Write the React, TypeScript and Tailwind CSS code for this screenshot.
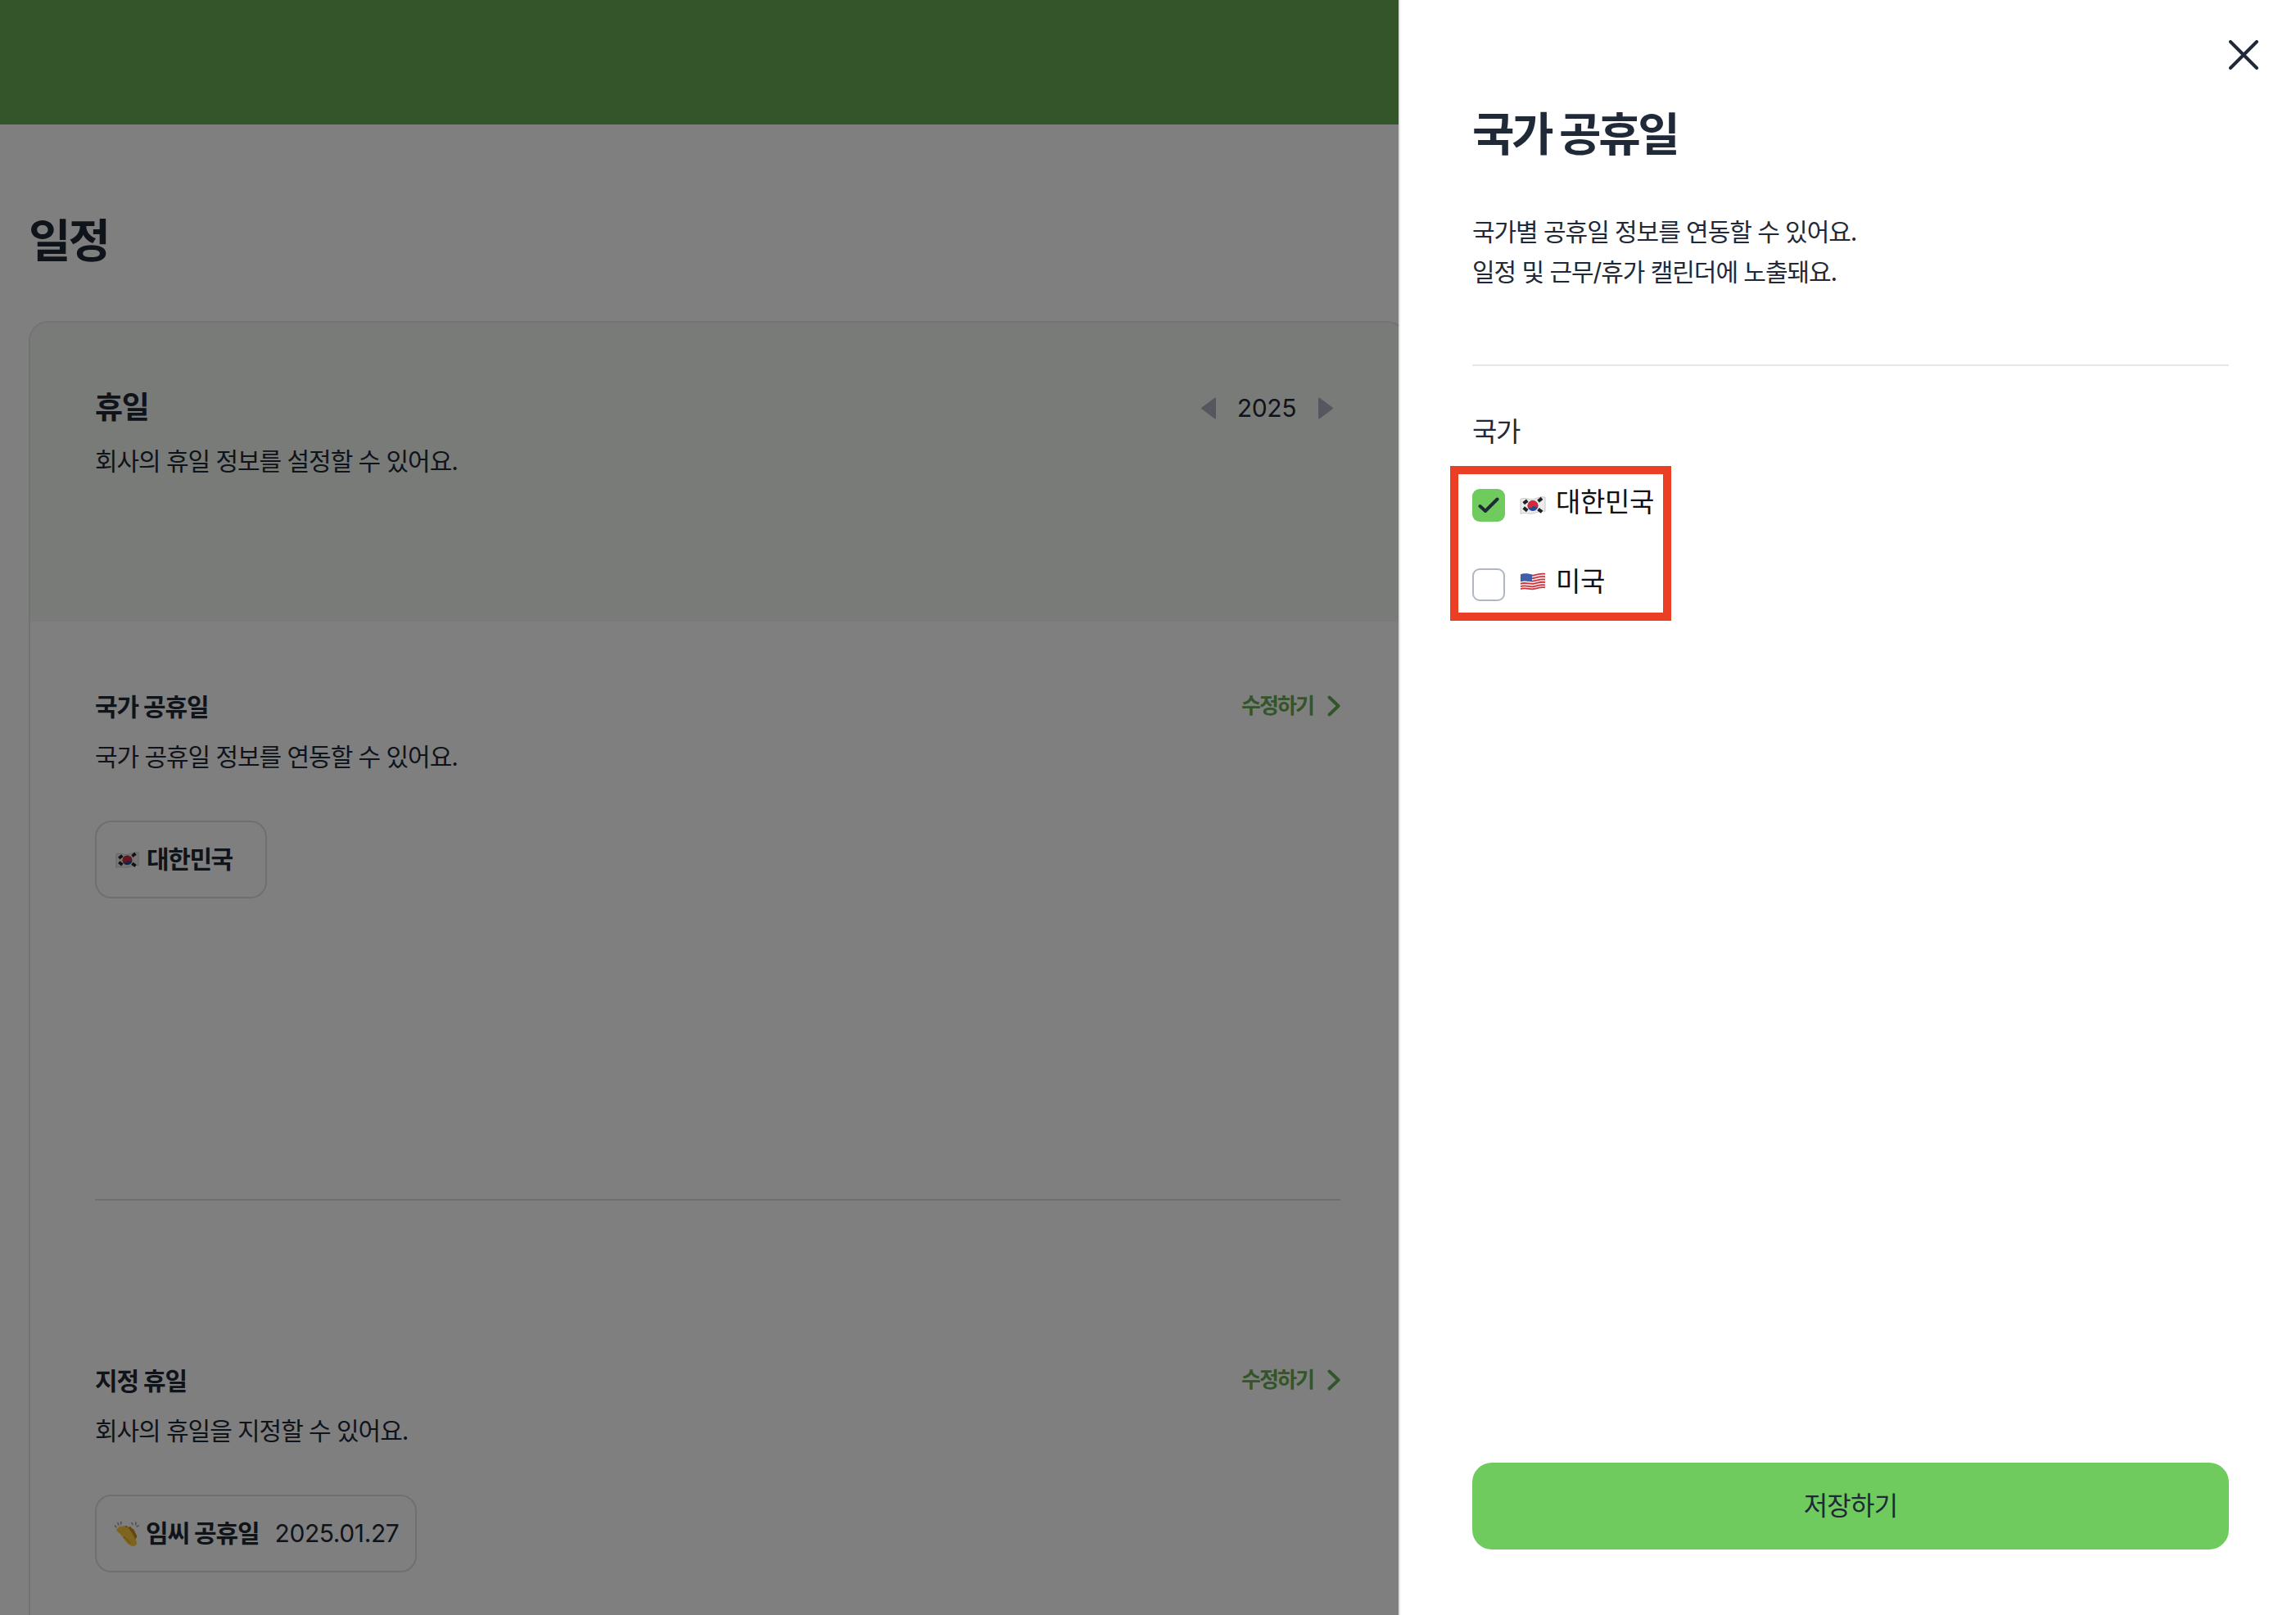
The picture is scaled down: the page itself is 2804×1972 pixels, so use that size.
// 일정 > 휴일 설정 화면 + 국가 공휴일 Drawer
import type { ReactNode } from 'react'

function KoreaFlag({ className }: { className?: string }) {
  return (
    <svg viewBox="0 0 32 24" className={className}>
      <path
        d="M1 4.500C7 1.500 12 6 17 4.500S26 .8 31 2.200V19.500C26 18 21 21 16 22S6 20 1 22.500Z"
        fill="#ececec"
        stroke="#bdbdbd"
        strokeWidth="0.800"
      />
      <circle cx="16" cy="12.500" r="6.500" fill="#254b96" />
      <path d="M9.600 13.600a6.500 6.500 0 0 1 12.800-2.200c.3 1.900-1.900 3.200-3.500 2.100-1.500-1-3.200-.7-4.100.9-1.100 1.700-4.700 1-5.200-.8Z" fill="#d8283a" />
      <g stroke="#222" strokeWidth="2">
        <path d="M4.200 7.500l2.600 3.200M5.700 6.300l2.600 3.200M7.200 5.100l2.600 3.200" />
        <path d="M22 4.800l2.600 3.200M23.500 3.600L26.100 6.800M25 2.400l2.600 3.200" />
        <path d="M4.200 17.200l2.600-3.200M5.700 18.400l2.600-3.200M7.200 19.600l2.600-3.200" />
        <path d="M22 18.800l2.600-3.200M23.500 20L26.100 16.800M25 21.200l2.600-3.200" />
      </g>
    </svg>
  )
}

function UsaFlag({ className }: { className?: string }) {
  const stripes = [4.600, 8, 11.400, 14.800, 18.200, 21.200]
  return (
    <svg viewBox="0 0 32 24" className={className}>
      <path d="M1 3.500C7 .8 12 4.500 17 3.500S26 .5 31 1.600V20.500C26 19 21 21.500 16 22.300S6 21 1 23Z" fill="#f5f1f1" />
      {stripes.map((y) => (
        <path
          key={y}
          d={`M1 ${y}C7 ${y - 2.4} 12 ${y + 1} 17 ${y}S26 ${y - 2.8} 31 ${y - 1.8}`}
          fill="none"
          stroke="#d0353f"
          strokeWidth="1.800"
        />
      ))}
      <path d="M1 3.500C5 1.600 10 2.400 15 3.600V12.200C10 11 5 10.400 1 12.400Z" fill="#3f5fa8" />
    </svg>
  )
}

function ClapIcon({ className }: { className?: string }) {
  return (
    <svg viewBox="0 0 32 32" className={className}>
      <g stroke="#9a9a9a" strokeWidth="1.600" strokeLinecap="round">
        <path d="M1.500 6l1.200 1.500M5 2.500l.6 2.400M9 1.500l-.4 2.400M22 2.500l.8 2M27 2l-.4 2.600M30 6l-1.800 1" />
      </g>
      {/* 뒤쪽 손 */}
      <g stroke="#c88f1f" strokeWidth="4.600" strokeLinecap="round" fill="none">
        <path d="M24 23L15 8.500M25 21L19.500 9.500M26 19L22.500 12" />
      </g>
      {/* 앞쪽 손 */}
      <g stroke="#ffc93f" strokeWidth="4.400" strokeLinecap="round" fill="none">
        <path d="M17 21L5.500 11M18 19L8 8.500M20 18L12 8.200M21 17L16 10" />
      </g>
      <path d="M7 14c4-3 9-4 13-.5 3 2.500 4 5 5.500 8 1 2 3 4 2.500 6.500-.6 2.500-3.500 3.500-6.500 2.500C16 29 11 20 7 14Z" fill="#ffc93f" />
      <path d="M12 20c3 1 6 4 8 8" stroke="#c88f1f" strokeWidth="1" fill="none" />
    </svg>
  )
}

function EditLink() {
  return (
    <a className="-mt-[2px] flex items-center text-[26px] leading-[40px] font-bold tracking-[-1.900px] text-[#64ac54]">
      수정하기
      <svg viewBox="0 0 16 26" className="ml-[17px] h-[26px] w-[16px]" fill="none" stroke="currentColor" strokeWidth="4" strokeLinecap="round" strokeLinejoin="round">
        <path d="M2.500 2.500L13.500 13L2.500 23.500" />
      </svg>
    </a>
  )
}

function Chip({ children, width }: { children: ReactNode; width: string }) {
  return (
    <div className={`flex h-[95px] items-center rounded-[20px] border-2 border-[#dfdfdf] ${width}`}>{children}</div>
  )
}

function Section({ title, desc, children }: { title: string; desc: string; children: ReactNode }) {
  return (
    <div>
      <div className="flex h-[40px] items-center justify-between">
        <h3 className="text-[30px] leading-[40px] font-bold tracking-[-1.100px]">{title}</h3>
        <EditLink />
      </div>
      <p className="mt-[19px] text-[30px] leading-[44px] tracking-[-1.050px]">{desc}</p>
      <div className="mt-[56px]">{children}</div>
    </div>
  )
}

export default function App() {
  return (
    <div className="relative h-[1972px] w-[2804px] overflow-hidden bg-white text-[#1f2937] [font-family:Inter,'Noto_Sans_CJK_KR',sans-serif]">
      <div className="h-[152px] bg-[#65ad55]" />

      <div className="w-[1718px] pl-[35px]">
        <h1 className="mt-[106px] text-[56px] leading-[72px] font-bold tracking-[-3px]">일정</h1>

        <div className="mt-[62px] rounded-t-[24px] border-2 border-b-0 border-[#e3e5e3]">
          {/* 휴일 헤더 */}
          <div className="h-[365px] rounded-t-[22px] bg-[#f2f6f2] pt-[80px] pr-[79px] pl-[79px]">
            <div className="flex items-start justify-between">
              <h2 className="text-[37px] leading-[48px] font-bold tracking-[-1.200px]">휴일</h2>
              <div className="mr-[9px] flex h-[48px] items-center">
                <svg viewBox="0 0 18 27" className="h-[27px] w-[18px]" fill="#a9b1bd" stroke="#a9b1bd" strokeWidth="2" strokeLinejoin="round">
                  <path d="M17 1.500V25.500L1 13.500Z" />
                </svg>
                <span className="mr-[27px] ml-[26px] text-[30px] leading-[48px] tracking-[-0.400px]">2025</span>
                <svg viewBox="0 0 18 27" className="h-[27px] w-[18px]" fill="#a9b1bd" stroke="#a9b1bd" strokeWidth="2" strokeLinejoin="round">
                  <path d="M1 1.500V25.500L17 13.500Z" />
                </svg>
              </div>
            </div>
            <p className="mt-[19px] text-[30px] leading-[44px] tracking-[-1.050px]">회사의 휴일 정보를 설정할 수 있어요.</p>
          </div>

          <div className="px-[79px] pt-[84px] pb-[200px]">
            <Section title="국가 공휴일" desc="국가 공휴일 정보를 연동할 수 있어요.">
              <Chip width="w-[210px]">
                <KoreaFlag className="ml-[23px] h-[22px] w-[29px]" />
                <span className="ml-[9px] text-[30px] font-bold tracking-[-1.400px]">대한민국</span>
              </Chip>
            </Section>

            <div className="mt-[367px] h-[2px] bg-[#dfdfdf]" />

            <div className="mt-[200px]">
              <Section title="지정 휴일" desc="회사의 휴일을 지정할 수 있어요.">
                <Chip width="w-[393px]">
                  <ClapIcon className="ml-[21px] h-[32px] w-[32px]" />
                  <span className="ml-[7px] text-[30px] font-bold tracking-[-1.100px]">임씨 공휴일</span>
                  <span className="ml-[19px] text-[30px] tracking-[-0.400px]">2025.01.27</span>
                </Chip>
              </Section>
            </div>
          </div>
        </div>
      </div>

      {/* 딤 처리 */}
      <div className="absolute inset-0 bg-black/50" />

      {/* 국가 공휴일 Drawer */}
      <aside className="absolute top-0 right-0 bottom-0 flex w-[1096px] flex-col border-l-2 border-[#e2e3e5] bg-white pt-[128px] pr-[82px] pl-[88px]">
        <button type="button" className="absolute top-[49px] right-[46px]" aria-label="닫기">
          <svg viewBox="0 0 36 36" className="block h-[36px] w-[36px]" fill="none" stroke="#1f2937" strokeWidth="4" strokeLinecap="round">
            <path d="M2 2L34 34M34 2L2 34" />
          </svg>
        </button>

        <h2 className="text-[56px] leading-[72px] font-bold tracking-[-3.400px]">국가 공휴일</h2>

        <p className="mt-[59px] text-[30px] leading-[49px] tracking-[-1.050px]">
          국가별 공휴일 정보를 연동할 수 있어요.
          <br />
          일정 및 근무/휴가 캘린더에 노출돼요.
        </p>

        <div className="mt-[88px] h-[2px] bg-[#e5e7eb]" />

        <p className="mt-[58px] text-[33px] leading-[44px] tracking-[-1.400px]">국가</p>

        <div className="mt-[20px] -ml-[27px] h-[189px] w-[270px] border-[10px] border-[#ea3f24] pt-[18px] pl-[17px] text-[33px] tracking-[-0.400px] text-[#111]">
          <label className="flex h-[40px] items-center">
            <span className="flex h-[40px] w-[40px] items-center justify-center rounded-[9px] bg-[#70cb5e]">
              <svg viewBox="0 0 26 20" className="h-[20px] w-[26px]" fill="none" stroke="#1f2937" strokeWidth="4" strokeLinecap="round" strokeLinejoin="round">
                <path d="M2.500 11L9 17L23.500 2.500" />
              </svg>
            </span>
            <KoreaFlag className="ml-[18px] h-[24px] w-[32px]" />
            <span className="relative -top-[3px] ml-[12px]">대한민국</span>
          </label>
          <label className="mt-[57px] flex h-[40px] items-center">
            <span className="h-[40px] w-[40px] rounded-[9px] border-2 border-[#b0b6c3]" />
            <UsaFlag className="relative -top-[4px] ml-[18px] h-[24px] w-[32px]" />
            <span className="relative -top-[3px] ml-[12px]">미국</span>
          </label>
        </div>

        <button type="button" className="mt-auto mb-[80px] h-[106px] rounded-[24px] bg-[#70cb5e] text-[32px] tracking-[-0.800px]">
          저장하기
        </button>
      </aside>
    </div>
  )
}
